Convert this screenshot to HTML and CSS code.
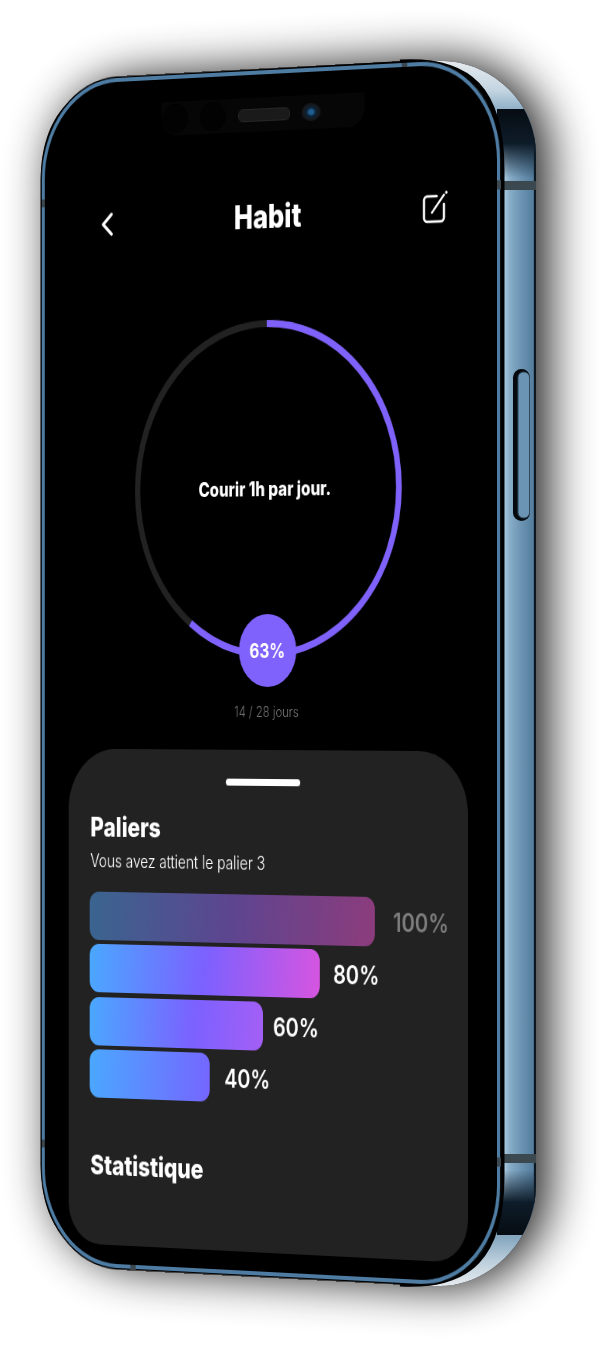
FILE: index.html
```html
<!DOCTYPE html>
<html lang="fr">
<head>
  <meta charset="utf-8">
  <title>Habit</title>
  <link rel="stylesheet" href="styles.css">
</head>
<body>
  <div class="stage">
    <!-- phone body: shadow and side face -->
    <svg class="body-art" width="616" height="1346" viewBox="0 0 616 1346">
      <defs>
        <path id="outline" d="M41 180C41 115 75 82 130 77L385 62C400 61 430 60 443 61C490 62 536 100 536 155L536 1185C536 1240 490 1286 440 1286C420 1286 400 1284 385 1283L130 1268C75 1262 41 1230 41 1165Z"/>
        <clipPath id="outlineClip"><use href="#outline"/></clipPath>
        <filter id="soft" x="-30%" y="-15%" width="160%" height="130%">
          <feGaussianBlur stdDeviation="24"/>
        </filter>
        <linearGradient id="corners" x1="0" y1="60" x2="0" y2="1286" gradientUnits="userSpaceOnUse">
          <stop offset="0" stop-color="#e6ebef"/>
          <stop offset=".025" stop-color="#c3d4e1"/>
          <stop offset=".04" stop-color="#8fb0c8"/>
          <stop offset=".96" stop-color="#84a6bf"/>
          <stop offset=".98" stop-color="#bccfdc"/>
          <stop offset="1" stop-color="#e6ebef"/>
        </linearGradient>
        <linearGradient id="sideBlue" x1="503" y1="0" x2="536" y2="0" gradientUnits="userSpaceOnUse">
          <stop offset="0" stop-color="#b3d0e4"/>
          <stop offset=".2" stop-color="#88adc8"/>
          <stop offset=".6" stop-color="#6890af"/>
          <stop offset=".92" stop-color="#557d9d"/>
          <stop offset=".95" stop-color="#0d1720"/>
        </linearGradient>
        <linearGradient id="glossTop" x1="0" y1="109" x2="0" y2="178" gradientUnits="userSpaceOnUse">
          <stop offset="0" stop-color="#060c12"/>
          <stop offset=".5" stop-color="#0e1c29"/>
          <stop offset="1" stop-color="#0e1c29" stop-opacity="0"/>
        </linearGradient>
        <linearGradient id="glossBottom" x1="0" y1="1170" x2="0" y2="1235" gradientUnits="userSpaceOnUse">
          <stop offset="0" stop-color="#0e1c29" stop-opacity="0"/>
          <stop offset=".5" stop-color="#0e1c29"/>
          <stop offset="1" stop-color="#060c12"/>
        </linearGradient>
      </defs>
      <use href="#outline" class="shadow" filter="url(#soft)"/>
      <use href="#outline" class="silhouette"/>
      <g clip-path="url(#outlineClip)">
        <rect x="400" y="0" width="216" height="1346" fill="url(#corners)"/>
        <rect x="497" y="109" width="43" height="1126" fill="url(#sideBlue)"/>
        <rect x="497" y="109" width="43" height="69" fill="url(#glossTop)"/>
        <rect x="497" y="1170" width="43" height="65" fill="url(#glossBottom)"/>
        <rect class="band" x="504" y="181" width="34" height="9"/>
        <rect class="band" x="504" y="1154" width="34" height="9"/>
      </g>
      <rect class="side-button-well" x="513" y="369" width="17" height="152" rx="8.5"/>
      <rect class="side-button" x="518" y="372" width="11.5" height="146" rx="5.5"/>
      <path class="front-edge" d="M400 62C470 58 502 90 502 170V1176C502 1256 470 1288 400 1284"/>
    </svg>

    <!-- front face, drawn flat then turned in perspective -->
    <div class="front">
      <div class="bezel">
        <span class="antenna antenna-top"></span>
        <span class="antenna antenna-bottom"></span>
        <span class="antenna antenna-left-a"></span>
        <span class="antenna antenna-left-b"></span>
        <span class="antenna antenna-right-a"></span>
        <span class="antenna antenna-right-b"></span>

        <div class="screen">
          <div class="notch">
            <i class="notch-dot"></i>
            <i class="notch-dot"></i>
            <i class="speaker"></i>
            <i class="camera"></i>
          </div>

          <header class="top-bar">
            <svg class="back-icon" width="16" height="24" viewBox="0 0 16 24">
              <path d="M14 2L3 12l11 10" fill="none" stroke="#fff" stroke-width="3.4" stroke-linecap="round" stroke-linejoin="round"/>
            </svg>
            <h1 class="title">Habit</h1>
            <svg class="edit-icon" width="32" height="32" viewBox="0 0 32 32" fill="none" stroke="#fff" stroke-linecap="round">
              <path d="M18 5H6a4 4 0 0 0-4 4v17a4 4 0 0 0 4 4h17a4 4 0 0 0 4-4V13" stroke-width="2.6"/>
              <path d="M12 21L27 4" stroke-width="2.4"/>
              <circle cx="30" cy="1.6" r="1.6" fill="#fff" stroke="none"/>
            </svg>
          </header>

          <section class="progress">
            <svg class="ring" width="344" height="338" viewBox="0 0 340 340" preserveAspectRatio="none">
              <circle class="ring-track" cx="170" cy="170" r="166.5"/>
              <circle class="ring-value" cx="170" cy="170" r="166.5" pathLength="100" transform="rotate(-90 170 170)"/>
            </svg>
            <p class="goal">Courir 1h par jour.</p>
            <div class="percent">63%</div>
          </section>
          <p class="days">14 / 28 jours</p>

          <section class="sheet">
            <div class="handle"></div>
            <h2 class="sheet-title">Paliers</h2>
            <p class="sheet-text">Vous avez attient le palier 3</p>
            <div class="tiers">
              <div class="tier tier-100"><div class="tier-bar"></div><span class="tier-label">100%</span></div>
              <div class="tier tier-80"><div class="tier-bar"></div><span class="tier-label">80%</span></div>
              <div class="tier tier-60"><div class="tier-bar"></div><span class="tier-label">60%</span></div>
              <div class="tier tier-40"><div class="tier-bar"></div><span class="tier-label">40%</span></div>
            </div>
            <h2 class="sheet-title stats-title">Statistique</h2>
          </section>
        </div>
      </div>
    </div>
  </div>
</body>
</html>
```

FILE: styles.css
```css
* {
  box-sizing: border-box;
}

html, body {
  margin: 0;
  padding: 0;
  background: #fff;
}

body {
  font-family: Inter, "Liberation Sans", sans-serif;
  color: #fff;
  overflow: hidden;
}

.stage {
  position: relative;
  width: 616px;
  height: 1346px;
  overflow: hidden;
}

/* phone body */
.body-art {
  position: absolute;
  left: 0;
  top: 0;
}

.shadow {
  fill: #000;
  opacity: 0.9;
  transform: translate(12px, 0);
}

.silhouette {
  fill: #000;
}

.band {
  fill: #3c4850;
}

.side-button-well {
  fill: #05090d;
}

.side-button {
  fill: #6b93b3;
  stroke: #31485b;
  stroke-width: 1;
}

.front-edge {
  fill: none;
  stroke: #000;
  stroke-width: 5;
}

/* flat 592 x 1206 plane turned to fit the reference */
.front {
  position: absolute;
  left: 0;
  top: 0;
  width: 592px;
  height: 1206px;
  transform-origin: 0 0;
  transform: matrix3d(0.7425, -0.04466, 0, -0.0000663, 0, 0.9801, 0, 0, 0, 0, 1, 0, 41, 82, 0, 1);
}

.bezel {
  position: relative;
  margin-left: 1px;
  width: 591px;
  height: 1206px;
  border: 4.5px solid #4e7ca3;
  border-radius: 100px;
  background: #000;
  box-shadow: 0 0 0 1.5px #000;
}

.antenna {
  position: absolute;
  background: #3c4850;
}

.antenna-top { left: 464px; top: -4.5px; width: 7px; height: 4.5px; }
.antenna-bottom { left: 114px; bottom: -4.5px; width: 7px; height: 4.5px; }
.antenna-left-a { left: -4.5px; top: 116px; width: 4.5px; height: 8px; }
.antenna-left-b { left: -4.5px; top: 1075px; width: 4.5px; height: 8px; }
.antenna-right-a { right: -4.5px; top: 116px; width: 4.5px; height: 9px; }
.antenna-right-b { right: -4.5px; top: 1074px; width: 4.5px; height: 9px; }

.screen {
  position: relative;
  height: 100%;
  padding-top: 124px;
}

.notch {
  position: absolute;
  left: 155px;
  top: 23px;
  width: 262px;
  height: 34px;
  padding-left: 1px;
  display: flex;
  align-items: center;
  background: #060606;
  border-radius: 0 0 20px 20px;
}

.notch-dot {
  width: 34px;
  height: 30px;
  margin-right: 15px;
  border-radius: 50%;
  background: #020202;
}

.speaker {
  width: 67px;
  height: 13px;
  margin-left: 1px;
  border-radius: 6px;
  background: #1a1a1a;
  border: 1px solid #262626;
}

.camera {
  width: 24px;
  height: 18px;
  margin-left: 15px;
  border-radius: 50%;
  background: radial-gradient(ellipse at center, #1f5e92 0 16%, #0c2338 34%, #16171c 60%);
}

/* top bar */
.top-bar {
  display: flex;
  justify-content: space-between;
  align-items: flex-start;
  height: 32px;
  padding: 0 61px 0 75px;
}

.back-icon {
  align-self: flex-end;
}

.title {
  margin: 0 0 0 5px;
  font-size: 33px;
  line-height: 36px;
  font-weight: 800;
}

.edit-icon {
  display: block;
}

/* progress ring */
.progress {
  position: relative;
  width: 344px;
  height: 338px;
  margin: 90px auto 0;
  display: flex;
  align-items: center;
  justify-content: center;
}

.ring {
  position: absolute;
  left: 0;
  top: 0;
}

.ring-track,
.ring-value {
  fill: none;
  stroke-width: 7;
}

.ring-track {
  stroke: #222;
}

.ring-value {
  stroke: #7f62fb;
  stroke-dasharray: 60 100;
}

.goal {
  position: relative;
  margin: 0 5px 0 0;
  font-size: 19.5px;
  font-weight: 800;
}

.percent {
  position: absolute;
  left: 50%;
  bottom: -29px;
  width: 74px;
  height: 73px;
  margin-left: -36px;
  display: flex;
  align-items: center;
  justify-content: center;
  border-radius: 50%;
  background: #7f62fb;
  font-size: 20px;
  font-weight: 700;
}

.days {
  margin: 44px 0 0;
  text-align: center;
  font-size: 14.5px;
  line-height: 20px;
  font-weight: 300;
  color: #767676;
}

/* bottom sheet */
.sheet {
  width: 515px;
  height: 503px;
  margin: 28px 0 0 32px;
  padding: 29px 0 0 29px;
  background: #222;
  border-radius: 62px 62px 42px 42px;
}

.handle {
  width: 96px;
  height: 7px;
  margin: 0 0 0 178px;
  border-radius: 4px;
  background: #fff;
}

.sheet-title {
  margin: 28px 0 0;
  font-size: 27.5px;
  line-height: 30px;
  font-weight: 800;
}

.sheet-text {
  margin: 8px 0 0;
  font-size: 18px;
  line-height: 24px;
  font-weight: 350;
}

.tiers {
  margin: 19px 0 0 -1px;
  display: flex;
  flex-direction: column;
  gap: 4.4px;
}

.tier {
  display: flex;
  align-items: center;
}

.tier-bar {
  height: 49px;
  border-radius: 12px;
}

.tier-label {
  font-size: 25.5px;
  font-weight: 600;
}

.tier-100 .tier-bar {
  width: 370px;
  background: linear-gradient(95deg, #3a6590, #5d4590 50%, #8c3c7c);
}

.tier-100 .tier-label {
  margin-left: 23px;
  color: #7d7d7d;
}

.tier-80 .tier-bar {
  width: 300px;
  background: linear-gradient(95deg, #4aa8ff, #7b61ff 50%, #d655e0);
}

.tier-80 .tier-label {
  margin-left: 17px;
}

.tier-60 .tier-bar {
  width: 227px;
  background: linear-gradient(95deg, #4aa8ff, #7b61ff 60%, #a45ff5);
}

.tier-60 .tier-label {
  margin-left: 13px;
}

.tier-40 .tier-bar {
  width: 158px;
  background: linear-gradient(95deg, #4aa8ff, #7566ff);
}

.tier-40 .tier-label {
  margin-left: 19px;
}

.stats-title {
  margin-top: 53px;
}
```
